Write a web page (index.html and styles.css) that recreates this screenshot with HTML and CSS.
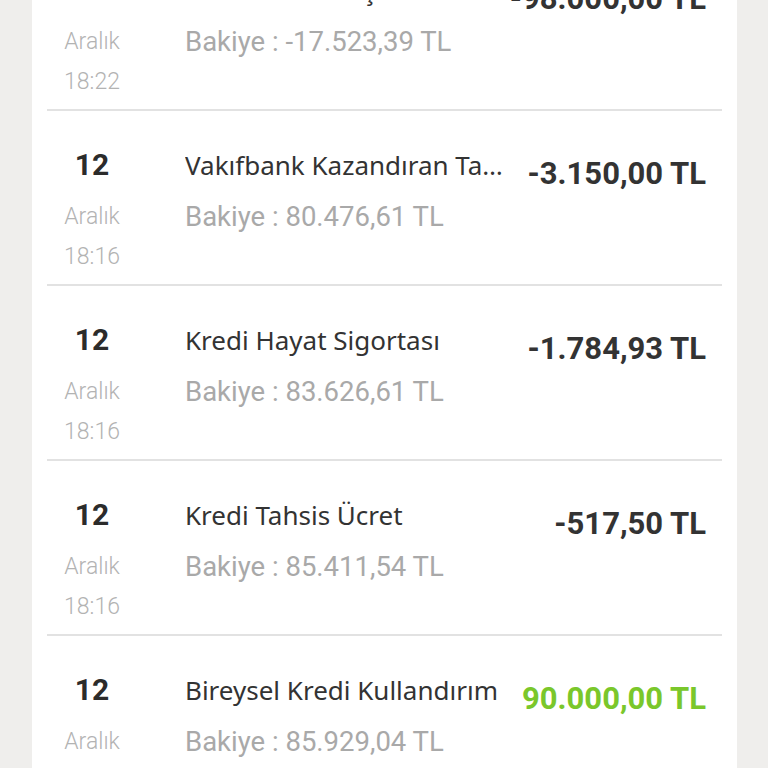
FILE: index.html
```html
<!DOCTYPE html>
<html lang="tr">
<head>
    <meta charset="UTF-8">
    <meta name="viewport" content="width=device-width, initial-scale=1.0">
    <title>Hesap Hareketleri</title>
    <link rel="stylesheet" href="styles.css">
</head>
<body>
    <div class="card">
        <div class="row">
            <div class="date">
                <div class="day">12</div>
                <div class="month">Aralık</div>
                <div class="time">18:22</div>
            </div>
            <div class="info">
                <div class="title">Kredi Kartı Borç Ödeme</div>
                <div class="balance">Bakiye : -17.523,39 TL</div>
            </div>
            <div class="amount">-98.000,00 TL</div>
        </div>
        <div class="row">
            <div class="date">
                <div class="day">12</div>
                <div class="month">Aralık</div>
                <div class="time">18:16</div>
            </div>
            <div class="info">
                <div class="title">Vakıfbank Kazandıran Taksit Ödemesi</div>
                <div class="balance">Bakiye : 80.476,61 TL</div>
            </div>
            <div class="amount">-3.150,00 TL</div>
        </div>
        <div class="row">
            <div class="date">
                <div class="day">12</div>
                <div class="month">Aralık</div>
                <div class="time">18:16</div>
            </div>
            <div class="info">
                <div class="title">Kredi Hayat Sigortası</div>
                <div class="balance">Bakiye : 83.626,61 TL</div>
            </div>
            <div class="amount">-1.784,93 TL</div>
        </div>
        <div class="row">
            <div class="date">
                <div class="day">12</div>
                <div class="month">Aralık</div>
                <div class="time">18:16</div>
            </div>
            <div class="info">
                <div class="title">Kredi Tahsis Ücret</div>
                <div class="balance">Bakiye : 85.411,54 TL</div>
            </div>
            <div class="amount">-517,50 TL</div>
        </div>
        <div class="row">
            <div class="date">
                <div class="day">12</div>
                <div class="month">Aralık</div>
                <div class="time">18:16</div>
            </div>
            <div class="info">
                <div class="title">Bireysel Kredi Kullandırım</div>
                <div class="balance">Bakiye : 85.929,04 TL</div>
            </div>
            <div class="amount positive">90.000,00 TL</div>
        </div>
    </div>
</body>
</html>
```

FILE: styles.css
```css
body {
    margin: 0;
    background: #efeeec;
    font-family: Roboto, "Noto Sans", sans-serif;
    overflow: hidden;
    height: 768px;
}
.card {
    background: #fff;
    margin: -64px 31px 0 32px;
    padding: 0 15px;
}
.row {
    display: flex;
    align-items: flex-start;
    padding: 34px 16px 7px 0;
    border-bottom: 2px solid #e2e2e2;
}
.date {
    width: 90px;
    flex: none;
    text-align: center;
}
.day {
    font-size: 30px;
    font-weight: bold;
    line-height: 40px;
    color: #2b2b2b;
}
.month {
    margin-top: 12px;
}
.month, .time {
    font-size: 23px;
    line-height: 40px;
    color: #b3b3b3;
    font-weight: 300;
}
.info {
    flex: 1;
    min-width: 0;
    margin-left: 48px;
}
.title {
    font-family: "Noto Sans", sans-serif;
    font-size: 26px;
    line-height: 40px;
    color: #333;
    white-space: nowrap;
    overflow: hidden;
    text-overflow: ellipsis;
}
.balance {
    margin-top: 12px;
    font-size: 27.5px;
    line-height: 40px;
    color: #a9a9a9;
}
.amount {
    flex: none;
    margin: 9px 0 0 18px;
    font-size: 31px;
    font-weight: bold;
    line-height: 40px;
    color: #333;
}
.positive {
    color: #7ac72b;
}
```
